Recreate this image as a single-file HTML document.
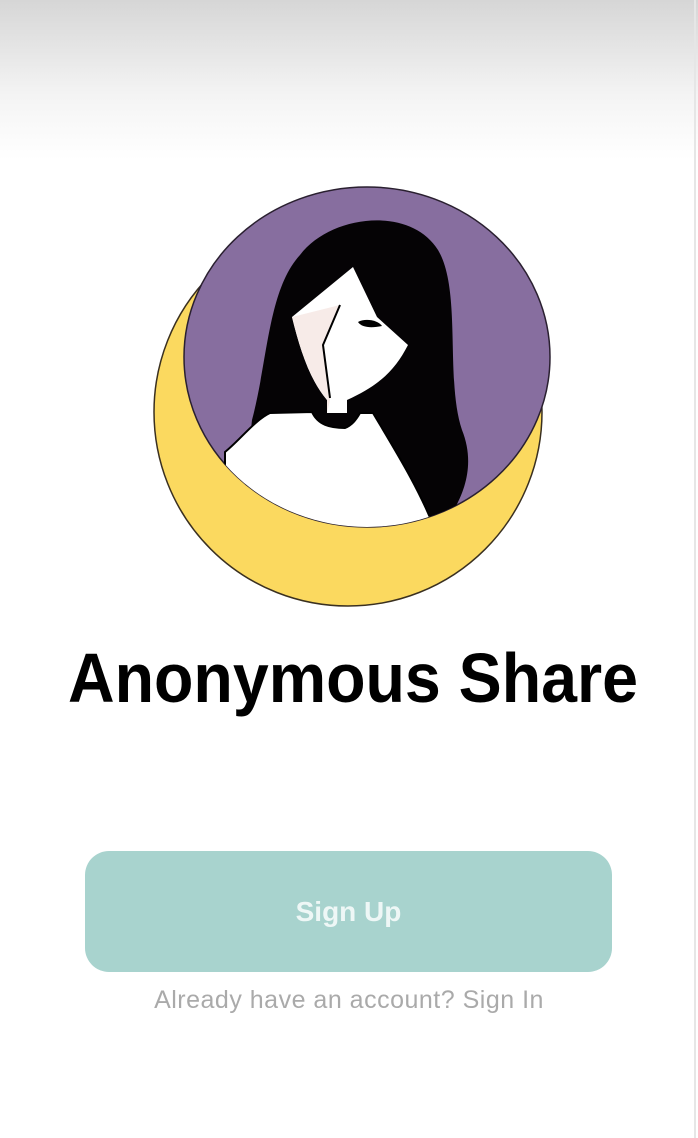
<!DOCTYPE html>
<html><head><meta charset="utf-8"><style>
html,body{margin:0;padding:0}
body{width:698px;height:1138px;position:relative;overflow:hidden;background:#fff;font-family:"Liberation Sans",sans-serif}
.top{position:absolute;left:0;top:0;width:698px;height:160px;background:linear-gradient(#d6d6d6,#f4f4f4 60%,#fff)}
.edge{position:absolute;right:2px;top:0;width:2px;height:1138px;background:#e6e6e6}
.btn{position:absolute;left:85px;top:851px;width:527px;height:121px;border-radius:24px;background:#a8d3ce;color:#eef7f6;font-weight:bold;font-size:28px;text-align:center;line-height:121px}
.sub{position:absolute;left:0;width:698px;top:986px;text-align:center;color:#aaa;font-size:25px;letter-spacing:0.5px}
</style></head><body>
<div class="top"></div><div class="edge"></div>
<svg width="698" height="1138" style="position:absolute;left:0;top:0">
<defs><clipPath id="c"><ellipse cx="367" cy="357" rx="183" ry="170"/></clipPath></defs>
<circle cx="348" cy="412" r="194" fill="#fbd95f" stroke="#3a3020" stroke-width="1.5"/>
<ellipse cx="367" cy="357" rx="183" ry="170" fill="#876e9f" stroke="#2a2030" stroke-width="1.5"/>
<g clip-path="url(#c)">
<path d="M300,255 C330,215 410,205 438,250 C462,290 445,380 462,430 C478,470 460,505 440,530 L240,530 L252,420 C268,360 268,290 300,255 Z" fill="#050305"/>
<path d="M225,452 C240,440 255,420 270,413 L312,412 C318,425 330,428 345,428 C352,425 356,420 360,413 L373,413 C395,450 420,490 435,530 L225,530 Z" fill="#fff" stroke="#000" stroke-width="2"/>
<path d="M292,317 L353,267 L377,317 L408,345 C395,370 380,385 347,400 L347,413 L327,413 L327,400 C310,380 300,350 292,317 Z" fill="#fff"/>
<path d="M292,317 L340,305 L323,345 L330,400 L327,413 L327,400 C310,380 300,350 292,317Z" fill="#f7ebe8"/>
<path d="M340,305 L323,345 L330,398" fill="none" stroke="#000" stroke-width="2"/>
<path d="M358,322 C365,318 378,320 382,326 C372,328 362,328 358,322Z" fill="#000"/>
</g>
<text x="68" y="702" textLength="570" lengthAdjust="spacingAndGlyphs" font-family="Liberation Sans" font-weight="bold" font-size="70" fill="#000">Anonymous Share</text>
</svg>
<div class="btn">Sign Up</div>
<div class="sub">Already have an account? Sign In</div>
</body></html>
